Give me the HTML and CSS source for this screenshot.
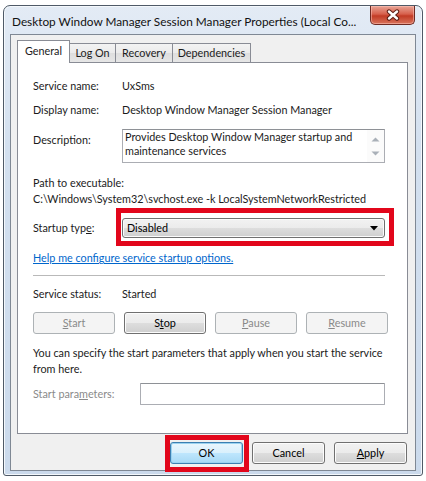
FILE: index.html
```html
<!DOCTYPE html>
<html>
<head>
<meta charset="utf-8">
<title>Properties</title>
<link rel="stylesheet" href="styles.css">
</head>
<body>
<div class="window">
  <div class="titlebar">
    <div class="title">Desktop Window Manager Session Manager Properties (Local Co...</div>
    <div class="close">
      <svg width="16" height="12" viewBox="0 0 16 12">
        <path d="M4 2.5 L12 9.5 M12 2.5 L4 9.5" stroke="#5a1d14" stroke-width="4.4" stroke-linecap="round" fill="none"/>
        <path d="M4 2.5 L12 9.5 M12 2.5 L4 9.5" stroke="#ffffff" stroke-width="2.4" stroke-linecap="round" fill="none"/>
      </svg>
    </div>
  </div>
  <div class="client">
    <div class="tabs">
      <div class="tab tab-general active">General</div>
      <div class="tab tab-logon">Log On</div>
      <div class="tab tab-recovery">Recovery</div>
      <div class="tab tab-deps">Dependencies</div>
    </div>
    <div class="panel">
      <div class="row row-name"><span class="label">Service name:</span><span class="value">UxSms</span></div>
      <div class="row row-display"><span class="label">Display name:</span><span class="value">Desktop Window Manager Session Manager</span></div>
      <div class="row row-desc">
        <span class="label desc-label">Description:</span>
        <div class="textbox">
          <div class="textbox-text">Provides Desktop Window Manager startup and<br>maintenance services</div>
          <div class="scroll">
            <svg width="9" height="5" viewBox="0 0 9 5"><path d="M0.5 4.5 L4.5 0.5 L8.5 4.5 Z" fill="#a9b0b8"/></svg>
            <svg width="9" height="5" viewBox="0 0 9 5"><path d="M0.5 0.5 L4.5 4.5 L8.5 0.5 Z" fill="#a9b0b8"/></svg>
          </div>
        </div>
      </div>
      <div class="path-label">Path to executable:</div>
      <div class="path-value">C:\Windows\System32\svchost.exe -k LocalSystemNetworkRestricted</div>
      <div class="row row-startup">
        <span class="label">Startup typ<u>e</u>:</span>
        <div class="combo highlight">
          <span>Disabled</span>
          <svg width="8" height="5" viewBox="0 0 8 5"><path d="M0 0 L8 0 L4 4.5 Z" fill="#000"/></svg>
        </div>
      </div>
      <a class="link" href="#">Help me configure service startup options.</a>
      <div class="separator"></div>
      <div class="row row-status"><span class="label">Service status:</span><span class="value">Started</span></div>
      <div class="btn-row">
        <div class="btn disabled"><span><u>S</u>tart</span></div>
        <div class="btn"><span>S<u>t</u>op</span></div>
        <div class="btn disabled"><span><u>P</u>ause</span></div>
        <div class="btn disabled"><span><u>R</u>esume</span></div>
      </div>
      <p class="info">You can specify the start parameters that apply when you start the service<br>from here.</p>
      <div class="row row-params">
        <span class="label label-wide muted">Start para<u>m</u>eters:</span>
        <div class="input"></div>
      </div>
    </div>
    <div class="footer">
      <div class="btn btn-footer default highlight-ok"><span>OK</span></div>
      <div class="btn btn-footer"><span>Cancel</span></div>
      <div class="btn btn-footer"><span><u>A</u>pply</span></div>
    </div>
  </div>
</div>
</body>
</html>
```
FILE: styles.css
```css
html, body {
  margin: 0;
  padding: 0;
  background: #ffffff;
}

body {
  font-family: Lato, "Open Sans", "Liberation Sans", sans-serif;
  font-size: 10.8px;
  line-height: 16px;
  color: #1b1b1b;
}

.window {
  margin: 5px 0 0 3px;
  width: 420px;
  height: 471px;
  box-sizing: border-box;
  border: 1px solid #4f5a67;
  border-radius: 7px 7px 3px 3px;
  background: linear-gradient(180deg, #e3ebf5 0%, #d3e0ef 30%, #cbdaec 100%);
  box-shadow: inset 0 0 0 1px #f4f8fc;
  padding: 0 6px 4px 6px;
  display: flex;
  flex-direction: column;
}

.titlebar {
  height: 28px;
  flex: none;
  display: flex;
  justify-content: space-between;
  align-items: flex-start;
}

.title {
  padding: 7px 0 0 2px;
  font-size: 11.8px;
  line-height: 18px;
  color: #111;
  white-space: nowrap;
  overflow: hidden;
  min-width: 0;
}

.close {
  flex: none;
  width: 45px;
  height: 19px;
  margin-right: 1px;
  box-sizing: border-box;
  border: 1px solid #6e2a22;
  border-top: none;
  border-radius: 0 0 5px 5px;
  background: linear-gradient(180deg, #e8a596 0%, #d7604c 45%, #c23b25 55%, #d8745c 100%);
  box-shadow: inset 0 0 0 1px rgba(255, 200, 190, 0.5);
  display: flex;
  align-items: center;
  justify-content: center;
}

.client {
  flex: 1;
  border: 1px solid #7f8894;
  background: #f0f0f0;
  padding: 7px 7px 0 6px;
  display: flex;
  flex-direction: column;
}

.tabs {
  height: 20px;
  flex: none;
  display: flex;
  align-items: flex-end;
  position: relative;
  z-index: 2;
}

.tab {
  height: 19px;
  box-sizing: border-box;
  border: 1px solid #898c95;
  border-bottom: none;
  margin-left: -1px;
  background: linear-gradient(180deg, #f3f3f3 0%, #ebebeb 50%, #dedede 51%, #e6e6e6 100%);
  display: flex;
  align-items: center;
  justify-content: center;
  line-height: 16px;
}

.tab-general {
  width: 53px;
  margin-left: 0;
}

.tab-logon {
  width: 47px;
}

.tab-recovery {
  width: 58px;
}

.tab-deps {
  width: 79px;
}

.tab.active {
  height: 23px;
  margin-bottom: -1px;
  padding-bottom: 3px;
  background: #ffffff;
  position: relative;
  z-index: 3;
}

.panel {
  height: 372px;
  flex: none;
  box-sizing: border-box;
  border: 1px solid #898c95;
  background: #ffffff;
  padding: 0 22px 0 15px;
  display: flex;
  flex-direction: column;
  align-items: flex-start;
}

.row {
  display: flex;
  align-items: center;
  align-self: stretch;
}

.label {
  width: 89px;
  flex: none;
}

.label-wide {
  width: 107px;
}

.muted {
  color: #8a8a8a;
}

.row-name {
  margin-top: 15px;
}

.row-display {
  margin-top: 8px;
}

.row-desc {
  margin-top: 11px;
  align-items: flex-start;
}

.desc-label {
  padding-top: 3px;
}

.textbox {
  width: 266px;
  height: 34px;
  box-sizing: border-box;
  border: 1px solid #abadb3;
  border-top-color: #8e9196;
  background: #fff;
  display: flex;
}

.textbox-text {
  flex: 1;
  padding: 0 0 0 2px;
  line-height: 14px;
  white-space: nowrap;
}

.scroll {
  width: 17px;
  display: flex;
  flex-direction: column;
  justify-content: space-between;
  align-items: center;
  padding: 7px 0 6px 0;
  background: #fbfbfb;
}

.scroll svg {
  display: block;
}

.path-label {
  margin-top: 12px;
}

.path-value {
  white-space: nowrap;
}

.row-startup {
  margin-top: 11px;
}

.combo {
  width: 266px;
  height: 20px;
  box-sizing: border-box;
  border: 1px solid #707070;
  border-radius: 3px;
  background: linear-gradient(180deg, #f2f2f2 0%, #ebebeb 50%, #dddddd 51%, #cfcfcf 100%);
  box-shadow: inset 0 0 0 1px #fbfbfb;
  padding: 0 6px 0 4px;
  display: flex;
  align-items: center;
  justify-content: space-between;
  color: #000;
}

.highlight {
  position: relative;
}

.highlight::after {
  content: "";
  position: absolute;
  left: -7px;
  right: -10px;
  top: -11px;
  bottom: -9px;
  border: 5px solid #e2061b;
  pointer-events: none;
}

.link {
  margin-top: 12px;
  color: #0066cc;
  text-decoration: underline;
}

.separator {
  margin-top: 9px;
  height: 1px;
  align-self: stretch;
  background: #b9b9b9;
}

.row-status {
  margin-top: 10px;
}

.btn-row {
  margin-top: 10px;
  display: flex;
  gap: 9px;
}

.btn {
  width: 82px;
  height: 22px;
  box-sizing: border-box;
  border: 1px solid #707070;
  border-radius: 3px;
  background: linear-gradient(180deg, #f2f2f2 0%, #ebebeb 50%, #dddddd 51%, #cfcfcf 100%);
  box-shadow: inset 0 0 0 1px #fcfcfc;
  display: flex;
  align-items: center;
  justify-content: center;
  color: #000;
}

.btn.disabled {
  border-color: #adb2b5;
  background: #f4f4f4;
  box-shadow: none;
  color: #8a8a8a;
}

.info {
  margin: 11px 0 0 0;
  white-space: nowrap;
}

.row-params {
  margin-top: 6px;
}

.input {
  width: 248px;
  height: 22px;
  box-sizing: border-box;
  border: 1px solid #abadb3;
  border-top-color: #8e9196;
  border-radius: 1px;
  background: #fff;
}

.footer {
  margin-top: 8px;
  margin-right: 1px;
  display: flex;
  justify-content: flex-end;
  gap: 9px;
}

.btn-footer {
  width: 73px;
}

.btn.default {
  border-color: #3c7fb1;
  background: linear-gradient(180deg, #eaf6fd 0%, #d9f0fc 50%, #bee6fd 51%, #a7d9f5 100%);
  box-shadow: inset 0 0 0 1px #9ad2f0;
}

.highlight-ok {
  position: relative;
}

.highlight-ok::after {
  content: "";
  position: absolute;
  left: -6px;
  right: -7px;
  top: -8px;
  bottom: -9px;
  border: 5px solid #e2061b;
  pointer-events: none;
}
```
